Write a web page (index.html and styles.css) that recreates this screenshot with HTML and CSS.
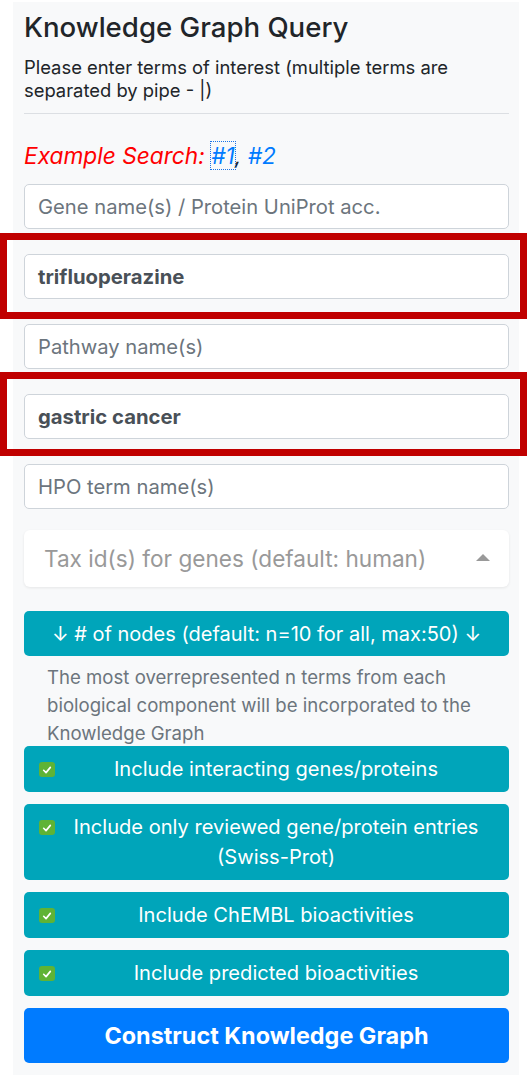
FILE: index.html
```html
<!DOCTYPE html>
<html>
<head>
<meta charset="utf-8">
<link rel="stylesheet" href="styles.css">
</head>
<body>
<div class="panel">
  <h1 class="title">Knowledge Graph Query</h1>
  <p class="intro">Please enter terms of interest (multiple terms are separated by pipe - |)</p>
  <hr class="rule">
  <p class="example"><span class="ex-label">Example Search:</span> <a class="ex-link focus" href="#">#1</a>, <a class="ex-link" href="#">#2</a></p>
  <div class="fields">
    <div class="field placeholder">Gene name(s) / Protein UniProt acc.</div>
    <div class="field value">trifluoperazine</div>
    <div class="field placeholder">Pathway name(s)</div>
    <div class="field value">gastric cancer</div>
    <div class="field placeholder">HPO term name(s)</div>
  </div>
  <div class="select">
    <span>Tax id(s) for genes (default: human)</span>
    <span class="caret"></span>
  </div>
  <div class="btn info nodes">↓ # of nodes (default: n=10 for all, max:50) ↓</div>
  <p class="help">The most overrepresented n terms from each biological component will be incorporated to the Knowledge Graph</p>
  <div class="checks">
    <div class="btn info check"><span class="box"><svg viewBox="0 0 16 16" width="16" height="16"><path d="M4.2 8.3 L6.9 11 L11.8 5" fill="none" stroke="#fff" stroke-width="1.9" stroke-linecap="round" stroke-linejoin="round"/></svg></span><span class="lbl">Include interacting genes/proteins</span></div>
    <div class="btn info check tall"><span class="box"><svg viewBox="0 0 16 16" width="16" height="16"><path d="M4.2 8.3 L6.9 11 L11.8 5" fill="none" stroke="#fff" stroke-width="1.9" stroke-linecap="round" stroke-linejoin="round"/></svg></span><span class="lbl">Include only reviewed gene/protein entries (Swiss-Prot)</span></div>
    <div class="btn info check"><span class="box"><svg viewBox="0 0 16 16" width="16" height="16"><path d="M4.2 8.3 L6.9 11 L11.8 5" fill="none" stroke="#fff" stroke-width="1.9" stroke-linecap="round" stroke-linejoin="round"/></svg></span><span class="lbl">Include ChEMBL bioactivities</span></div>
    <div class="btn info check"><span class="box"><svg viewBox="0 0 16 16" width="16" height="16"><path d="M4.2 8.3 L6.9 11 L11.8 5" fill="none" stroke="#fff" stroke-width="1.9" stroke-linecap="round" stroke-linejoin="round"/></svg></span><span class="lbl">Include predicted bioactivities</span></div>
  </div>
  <div class="btn primary">Construct Knowledge Graph</div>
</div>
<div class="mark mark-1"></div>
<div class="mark mark-2"></div>
</body>
</html>
```
FILE: styles.css
```css
html, body {
  margin: 0;
  padding: 0;
  background: #ffffff;
}
body {
  font-family: Inter, "Liberation Sans", Arial, sans-serif;
  color: #212529;
  position: relative;
  height: 1077px;
  overflow: hidden;
}
.panel {
  margin: 2px 0 0 13px;
  width: 506px;
  height: 1073px;
  box-sizing: border-box;
  padding: 8px 10px 0 11px;
  background: #f8f9fa;
}
.title {
  margin: 0;
  font-size: 27.6px;
  line-height: 34px;
  font-weight: 500;
  color: #212529;
}
.intro {
  margin: 12px 0 0;
  font-size: 18.4px;
  line-height: 23px;
  color: #212529;
}
.rule {
  margin: 11px 0 0;
  border: 0;
  border-top: 1px solid #dcdfe3;
  height: 0;
}
.example {
  margin: 29px 0 0;
  font-size: 22.7px;
  line-height: 26px;
  font-style: italic;
}
.ex-label {
  color: #ff0000;
}
.ex-link {
  color: #007bff;
  text-decoration: none;
}
.ex-link.focus {
  outline: 1px dotted #1a73e8;
}
.fields {
  margin-top: 15px;
  display: flex;
  flex-direction: column;
  gap: 25px;
}
.field {
  height: 45px;
  box-sizing: border-box;
  border: 1px solid #ced4da;
  border-radius: 5px;
  background: #fff;
  padding: 0 13px;
  display: flex;
  align-items: center;
  font-size: 20.2px;
}
.field.placeholder {
  color: #6c757d;
}
.field.value {
  color: #495057;
  font-weight: 700;
  font-size: 20.3px;
}
.select {
  margin-top: 21px;
  height: 57px;
  box-sizing: border-box;
  background: #fff;
  border-radius: 6px;
  box-shadow: 0 1px 3px rgba(0, 0, 0, 0.08);
  display: flex;
  align-items: center;
  justify-content: space-between;
  padding: 0 19px 0 20px;
  font-size: 22.6px;
  color: #999999;
}
.caret {
  width: 0;
  height: 0;
  border-left: 7px solid transparent;
  border-right: 7px solid transparent;
  border-bottom: 7px solid #999999;
  margin-top: -2px;
}
.btn {
  box-sizing: border-box;
  border-radius: 5px;
  color: #fff;
  display: flex;
  align-items: center;
  justify-content: center;
  text-align: center;
}
.info {
  background: #00a5ba;
}
.nodes {
  margin-top: 24px;
  height: 45px;
  font-size: 20px;
}
.help {
  margin: 7px 0 0;
  padding: 0 12px 0 23px;
  font-size: 18.6px;
  line-height: 28px;
  color: #6c757d;
}
.checks {
  margin-top: -1px;
  display: flex;
  flex-direction: column;
  gap: 12px;
}
.check {
  height: 46px;
  padding: 0 17px 0 15px;
  font-size: 20.1px;
  line-height: 30px;
  align-items: flex-start;
  padding-top: 8px;
}
.check.tall {
  height: 76px;
}
.box {
  flex: none;
  width: 16px;
  height: 15px;
  margin-top: 8px;
  border-radius: 3px;
  background: #5fb335;
  display: flex;
  align-items: center;
  justify-content: center;
}
.box svg {
  width: 14px;
  height: 14px;
}
.lbl {
  flex: 1;
  padding-left: 5px;
  text-align: center;
}
.primary {
  margin-top: 12px;
  height: 55px;
  background: #007bff;
  font-size: 23.4px;
  font-weight: 700;
}
.mark {
  position: absolute;
  left: 0;
  width: 527px;
  box-sizing: border-box;
  border: 7px solid #c00000;
}
.mark-1 {
  top: 233px;
  height: 86px;
}
.mark-2 {
  top: 372px;
  height: 84px;
}
```
